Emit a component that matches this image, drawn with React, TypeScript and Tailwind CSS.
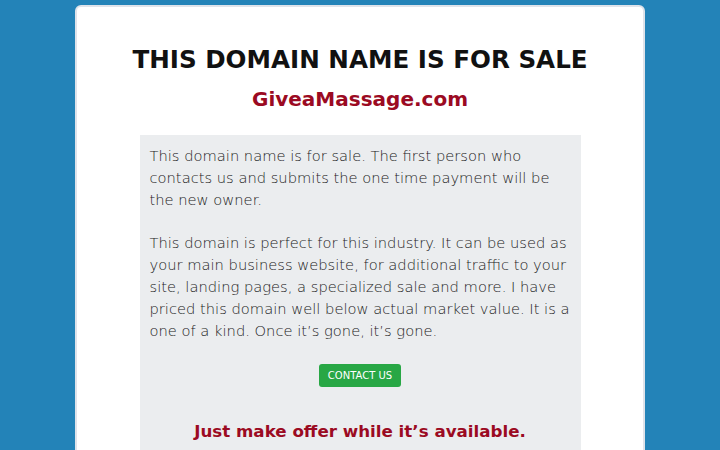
export default function App() {
  return (
    <div className="min-h-[450px] bg-[#2383b8] pt-[5px] font-['DejaVu_Sans',sans-serif]">
      <div className="mx-auto w-[570px] rounded-md border-2 border-[#dfe3ea] bg-white pt-[36px] pb-10">
        <h1 className="text-center text-[24.6px] font-bold leading-[34px] text-[#111]">
          THIS DOMAIN NAME IS FOR SALE
        </h1>
        <h2 className="mt-[9px] text-center text-[20px] font-bold leading-[26px] text-[#9b0a22]">
          GiveaMassage.com
        </h2>
        <div className="mx-auto mt-[23px] w-[441px] bg-[#ebedef] px-[10px] pt-[10px] pb-6">
          <p className="text-[14.7px] font-extralight leading-[22px] text-[#222]">
            This domain name is for sale. The first person who contacts us and submits the one time payment will be the new owner.
          </p>
          <p className="mt-[21px] text-[14.7px] font-extralight leading-[22px] text-[#222]">
            This domain is perfect for this industry. It can be used as your main business website, for additional traffic to your site, landing pages, a specialized sale and more. I have priced this domain well below actual market value. It is a one of a kind. Once it’s gone, it’s gone.
          </p>
          <div className="mt-[22px] flex justify-center">
            <button className="h-[23px] rounded-[3px] bg-[#28a745] px-[9px] text-[10px] leading-[15px] text-white">
              CONTACT US
            </button>
          </div>
          <p className="mt-[33px] text-center text-[16.7px] font-bold leading-[22px] text-[#9b0a22]">
            Just make offer while it’s available.
          </p>
        </div>
      </div>
    </div>
  );
}
